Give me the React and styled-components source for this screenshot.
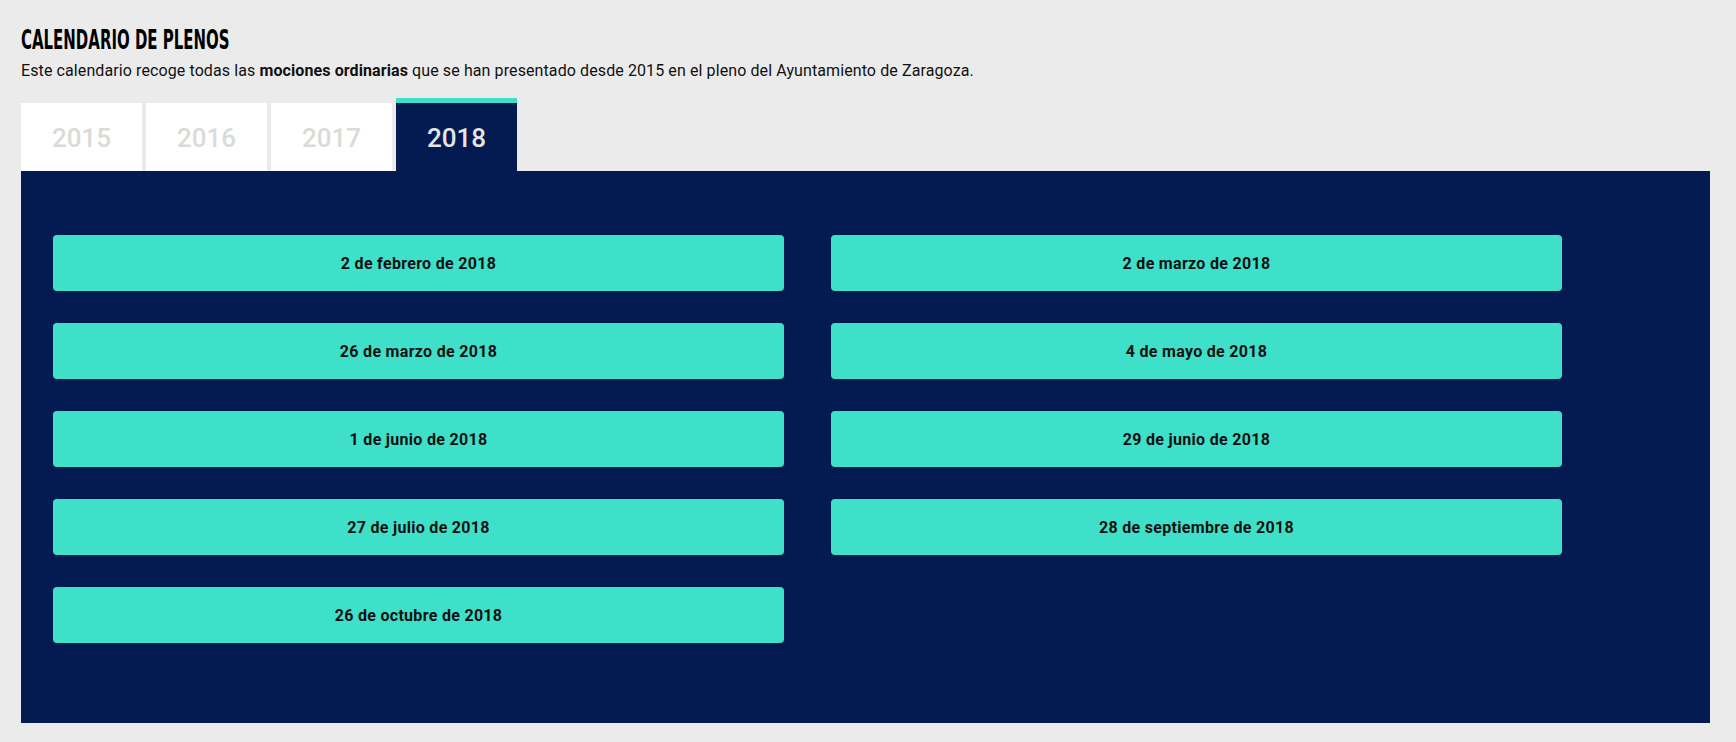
import React from "react";
import styled, {createGlobalStyle} from "styled-components";

const YEARS = ["2015", "2016", "2017", "2018"];

const PLENOS = [
  "2 de febrero de 2018",
  "2 de marzo de 2018",
  "26 de marzo de 2018",
  "4 de mayo de 2018",
  "1 de junio de 2018",
  "29 de junio de 2018",
  "27 de julio de 2018",
  "28 de septiembre de 2018",
  "26 de octubre de 2018",
];

const App = () => {
  const [year, setYear] = React.useState("2018");
  return (
    <>
      <GlobalStyle />
      <Page>
        <Title>
          <TitleText>CALENDARIO DE PLENOS</TitleText>
        </Title>
        <Intro>
          Este calendario recoge todas las <b>mociones ordinarias</b> que se han
          presentado desde 2015 en el pleno del Ayuntamiento de Zaragoza.
        </Intro>
        <Tabs>
          {YEARS.map((y) => (
            <Tab key={y} active={y === year} onClick={() => setYear(y)}>
              {y}
            </Tab>
          ))}
        </Tabs>
        <Panel>
          <DateGrid>
            {PLENOS.map((p) => (
              <DateButton key={p}>{p}</DateButton>
            ))}
          </DateGrid>
        </Panel>
      </Page>
    </>
  );
};

const GlobalStyle = createGlobalStyle`
  html, body {
    margin: 0;
    padding: 0;
    background: #ebebeb;
  }
  body {
    font-family: "Roboto", "Liberation Sans", sans-serif;
    color: #111;
  }
`;

const Page = styled.div`
  padding: 23px 26px 20px 21px;
`;

const Title = styled.h1`
  margin: 0;
  height: 34px;
  line-height: 34px;
  font-size: 26px;
`;

const TitleText = styled.span`
  display: inline-block;
  font-family: "DejaVu Sans Condensed", "DejaVu Sans", sans-serif;
  font-weight: 700;
  font-stretch: condensed;
  transform: scaleX(0.64);
  transform-origin: left center;
  white-space: nowrap;
  color: #000;
`;

const Intro = styled.p`
  margin: 3px 0 0;
  font-size: 16px;
  line-height: 22px;
  letter-spacing: 0.1px;
  color: #111;

  b {
    font-weight: 700;
  }
`;

const Tabs = styled.div`
  display: flex;
  align-items: flex-end;
  gap: 4px;
  margin-top: 16px;
`;

const Tab = styled.div`
  width: 121px;
  box-sizing: border-box;
  display: flex;
  align-items: center;
  justify-content: center;
  font-size: 26px;
  font-weight: 500;
  cursor: pointer;
  background: ${(props) => (props.active ? "#041b52" : "#fff")};
  color: ${(props) => (props.active ? "#e4e6e2" : "#d9dcd6")};
  border-top: ${(props) => (props.active ? "5px solid #3ee0c9" : "none")};
  height: ${(props) => (props.active ? "73px" : "68px")};
  padding-top: ${(props) => (props.active ? "1px" : "2px")};
`;

const Panel = styled.div`
  background: #041b52;
  padding: 64px 32px 80px;
`;

const DateGrid = styled.div`
  display: grid;
  grid-template-columns: 731px 731px;
  column-gap: 47px;
  row-gap: 32px;
`;

const DateButton = styled.div`
  height: 56px;
  border-radius: 4px;
  background: #3ee0c9;
  display: flex;
  align-items: center;
  justify-content: center;
  font-size: 16px;
  font-weight: 700;
  letter-spacing: 0.3px;
  color: #111;
  cursor: pointer;
`;

export default App;
